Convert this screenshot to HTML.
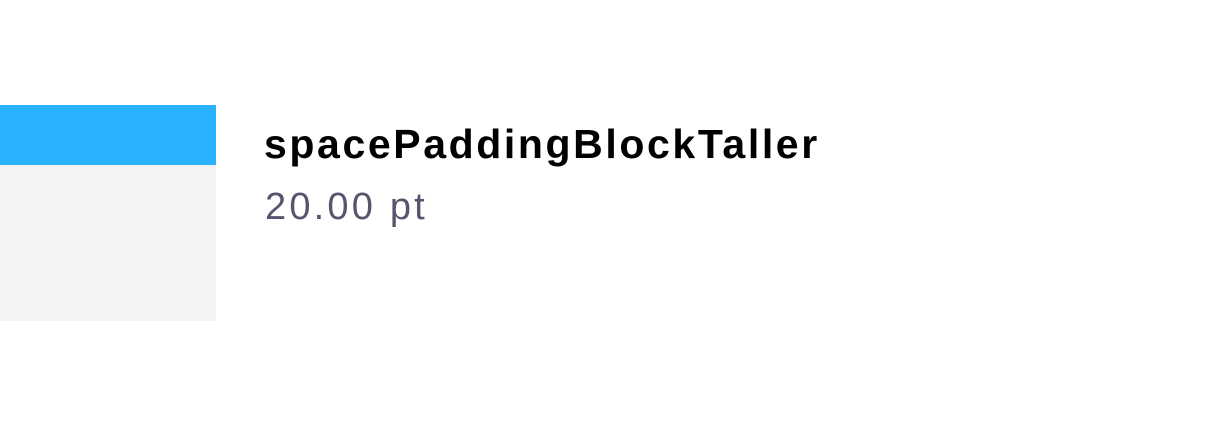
<!DOCTYPE html>
<html><head><meta charset="utf-8"><style>
html,body{margin:0;padding:0;background:#fff;width:1206px;height:426px;overflow:hidden;font-family:"Liberation Sans",sans-serif;}
.blue{position:absolute;left:0;top:105px;width:216px;height:60px;background:#29b2ff;}
.gray{position:absolute;left:0;top:165px;width:216px;height:156px;background:#f4f4f6;}
.t{position:absolute;left:264px;top:121px;font-size:41px;font-weight:bold;color:#000;letter-spacing:2.6px;white-space:nowrap;}
.s{position:absolute;left:265px;top:186px;font-size:38px;color:#57556e;letter-spacing:3.2px;white-space:nowrap;}
</style></head><body>
<div class="blue"></div><div class="gray"></div>
<div class="t">spacePaddingBlockTaller</div>
<div class="s">20.00 pt</div>
</body></html>
